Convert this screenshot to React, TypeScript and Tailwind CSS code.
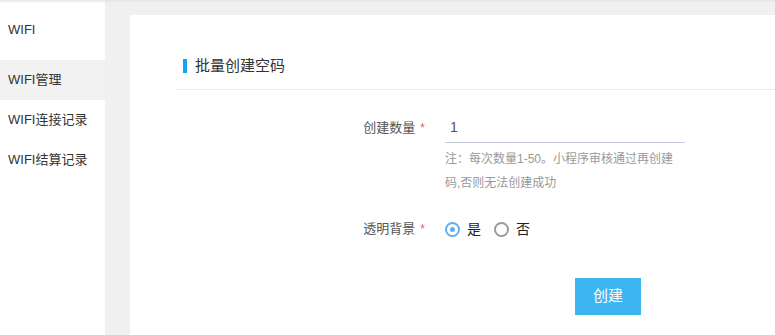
import React from "react";

const font = { fontFamily: '"Liberation Sans", "Noto Sans CJK SC", sans-serif' };

function Radio({ checked, label }: { checked: boolean; label: string }) {
  return (
    <div className="flex items-center">
      <span
        className={
          checked
            ? "w-[15px] h-[15px] rounded-full border-2 border-[#5cb0f8] flex items-center justify-center"
            : "w-[15px] h-[15px] rounded-full border-2 border-[#9a9a9a]"
        }
      >
        {checked && <span className="w-[5px] h-[5px] rounded-full bg-[#5cb0f8]" />}
      </span>
      <span className="ml-[7px] text-[14px] text-[#222] leading-[20px]">{label}</span>
    </div>
  );
}

export default function App() {
  return (
    <div className="relative flex h-[335px] w-[775px] overflow-hidden bg-[#f0f0f0]" style={font}>
      <div className="pointer-events-none absolute left-0 right-0 top-0 h-[3px] bg-gradient-to-b from-[#e4e4e4] to-transparent" />
      <aside className="w-[105px] shrink-0 bg-white pt-[10px] text-[13px] text-[#333]">
        <div className="h-[40px] flex items-center pl-[8px]">WIFI</div>
        <div className="h-[10px]" />
        <div className="h-[40px] flex items-center pl-[8px] bg-[#f2f2f2]">WIFI管理</div>
        <div className="h-[40px] flex items-center pl-[8px]">WIFI连接记录</div>
        <div className="h-[40px] flex items-center pl-[8px]">WIFI结算记录</div>
      </aside>
      <main className="flex-1 pl-[25px] pt-[15px]">
        <div className="h-full bg-white">
          <div className="ml-[45px] border-b border-[#ebebeb] pt-[43px] pb-[15px] pl-[8px] flex items-center">
            <span className="w-[4px] h-[14px] bg-[#12a6f2]" />
            <span className="ml-[8px] text-[15px] leading-[16px] text-[#333]">批量创建空码</span>
          </div>

          <div className="mt-[23px] flex">
            <div className="w-[295px] h-[30px] flex items-center justify-end text-[13px] text-[#555]">
              创建数量<span className="ml-[5px] text-[#f25a5a] text-[12px]">*</span>
            </div>
            <div className="ml-[20px] w-[240px]">
              <div className="h-[30px] border-b border-[#c3cad9] flex items-center pl-[5px] text-[14px] text-[#555]">
                1
              </div>
              <p className="mt-[4px] text-[12px] leading-[24px] text-[#999]">
                注：每次数量1-50。小程序审核通过再创建码,否则无法创建成功
              </p>
            </div>
          </div>

          <div className="mt-[19px] flex">
            <div className="w-[295px] h-[30px] flex items-center justify-end text-[13px] text-[#555]">
              透明背景<span className="ml-[5px] text-[#f25a5a] text-[12px]">*</span>
            </div>
            <div className="ml-[20px] h-[30px] flex items-center gap-[13px]">
              <Radio checked label="是" />
              <Radio checked={false} label="否" />
            </div>
          </div>

          <div className="mt-[34px] pl-[445px]">
            <button className="w-[66px] h-[37px] bg-[#3db5f0] text-white text-[15px]">创建</button>
          </div>
        </div>
      </main>
    </div>
  );
}
